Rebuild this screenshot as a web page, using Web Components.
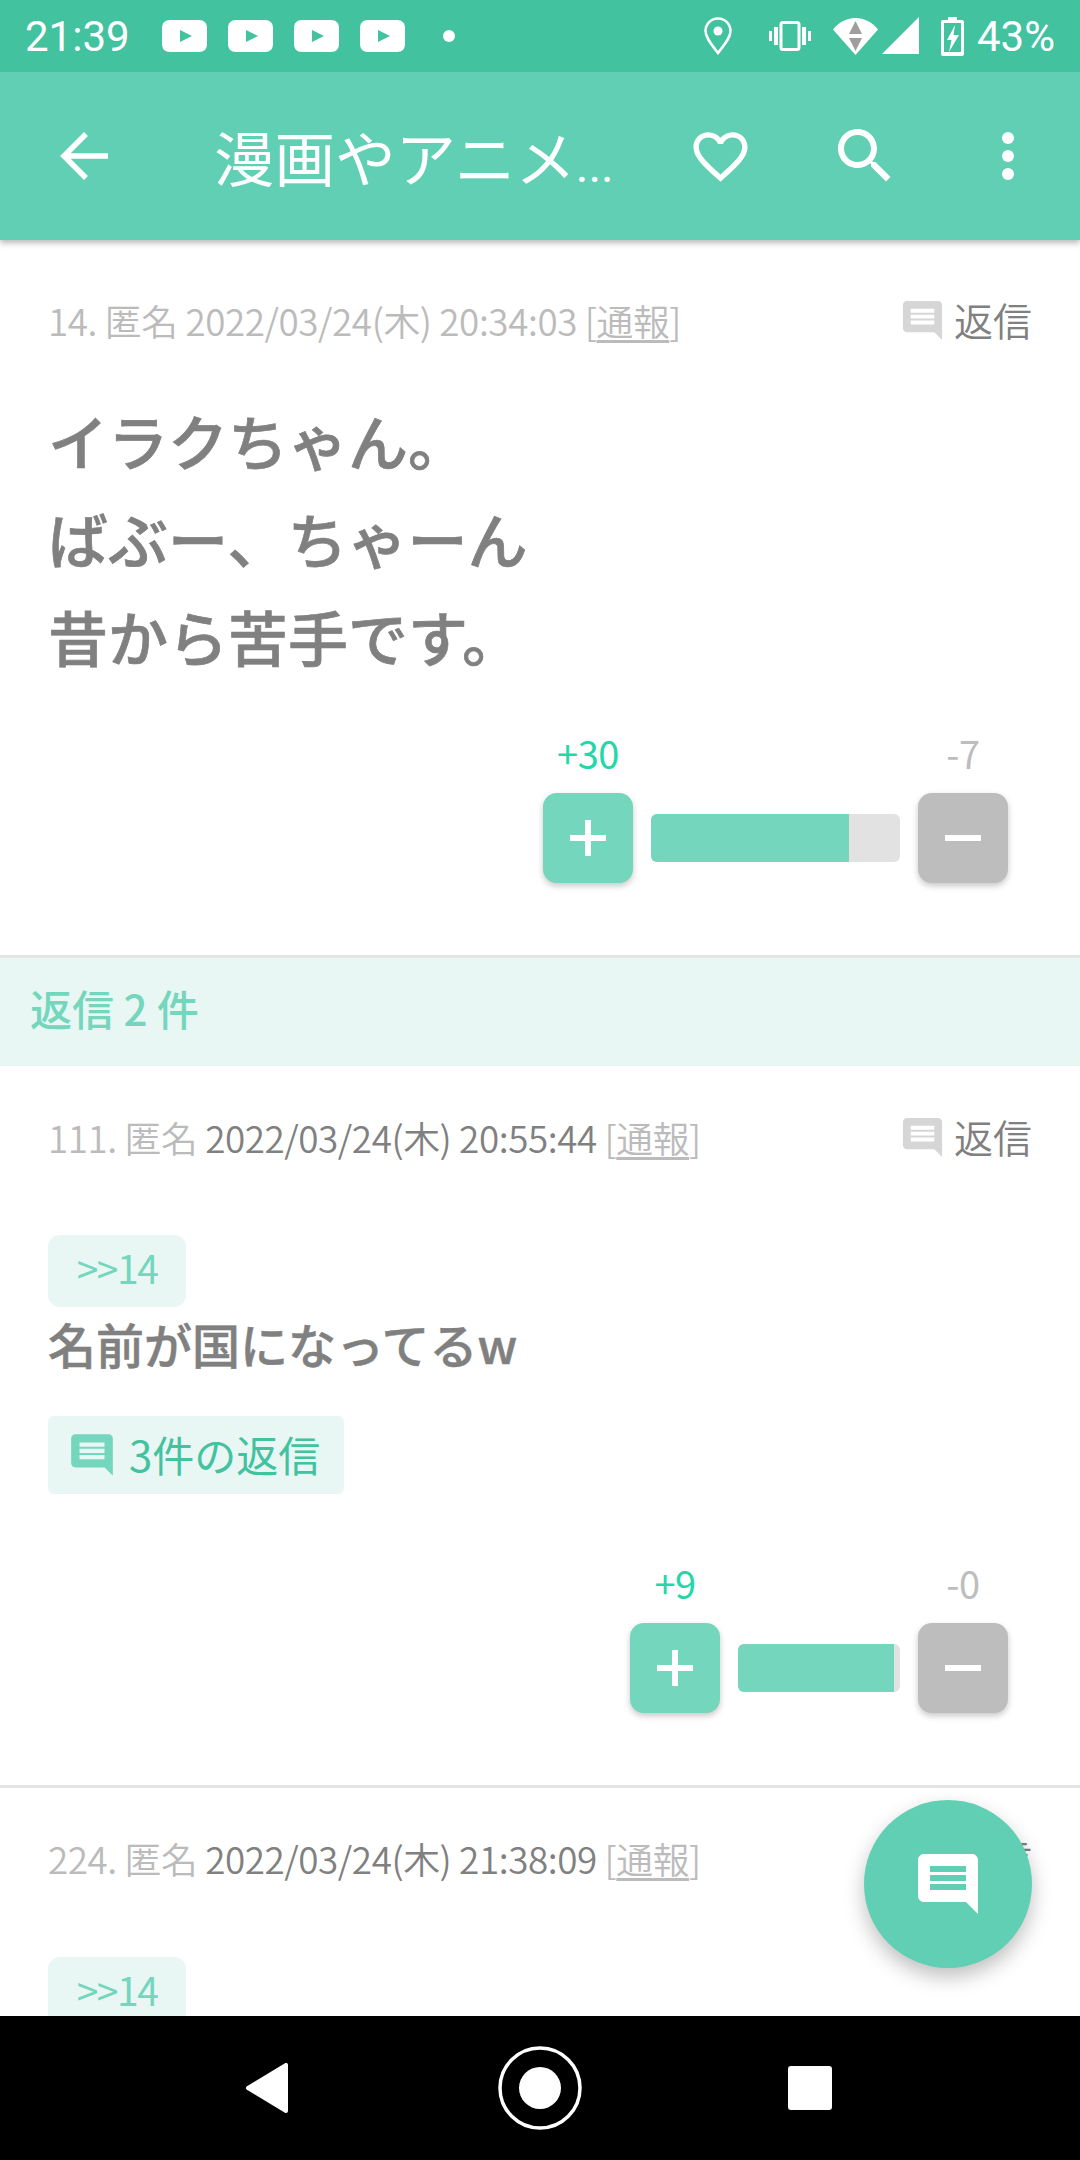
<!DOCTYPE html>
<html lang="ja">
<head>
<meta charset="utf-8">
<title>thread</title>
<style>
  html, body { margin: 0; padding: 0; background: #fff; }
  body { font-family: "Noto Sans CJK JP", "Noto Sans", sans-serif; }
  #first { --meta-top: 55px; --body-top: 46px; --vote-top: 43px; }
  #second { --meta-top: 46px; --body-top: 73px; --vote-top: 64px; }
  #third { --meta-top: 45px; --body-top: 74px; }
</style>
</head>
<body>
<thread-screen>
  <status-bar slot="top"></status-bar>
  <app-bar slot="top" title-text="漫画やアニメ"></app-bar>

  <post-item id="first" no="14." stamp="2022/03/24(木) 20:34:03" quiet big>
    <big-text>イラクちゃん。<br>ばぶー、ちゃーん<br>昔から苦手です。</big-text>
    <vote-bar slot="foot" plus="30" minus="7" track="249" fill="198"></vote-bar>
  </post-item>

  <reply-band>返信 2 件</reply-band>

  <post-item id="second" no="111." stamp="2022/03/24(木) 20:55:44">
    <anchor-tag>&gt;&gt;14</anchor-tag>
    <small-text>名前が国になってるw</small-text>
    <reply-chip>3件の返信</reply-chip>
    <vote-bar slot="foot" plus="9" minus="0" track="162" fill="156"></vote-bar>
  </post-item>

  <post-item id="third" no="224." stamp="2022/03/24(木) 21:38:09">
    <anchor-tag>&gt;&gt;14</anchor-tag>
  </post-item>

  <chat-fab slot="over"></chat-fab>
  <nav-bar slot="bottom"></nav-bar>
</thread-screen>

<script>
const COMMENT = 'M21.99 4c0-1.1-.89-2-1.99-2H4c-1.1 0-2 .9-2 2v12c0 1.1.9 2 2 2h14l4 4-.01-18zM18 14H6v-2h12v2zm0-3H6V9h12v2zm0-3H6V6h12v2z';
const CJK = '"Noto Sans CJK JP", "Noto Sans", sans-serif';

class ThreadScreen extends HTMLElement {
  constructor() {
    super();
    this.attachShadow({mode: 'open'}).innerHTML = `
    <style>
      :host { display: flex; flex-direction: column; position: relative; width: 1080px; height: 2160px; overflow: hidden; background: #fff; }
      .list { flex: 1; min-height: 0; overflow: hidden; }
    </style>
    <slot name="top"></slot>
    <div class="list"><slot></slot></div>
    <slot name="over"></slot>
    <slot name="bottom"></slot>`;
  }
}
customElements.define('thread-screen', ThreadScreen);

class StatusBar extends HTMLElement {
  constructor() {
    super();
    const yt = `<svg width="45" height="32" viewBox="0 0 45 32"><path fill="#fff" d="M8 0H37C42 0 45 3 45 8V24C45 29 42 32 37 32H8C3 32 0 29 0 24V8C0 3 3 0 8 0Z"/><path fill="#43c2a0" d="M18 10L30 16L18 22Z"/></svg>`;
    this.attachShadow({mode: 'open'}).innerHTML = `
    <style>
      :host { display: flex; align-items: center; height: 72px; padding: 0 25px; box-sizing: border-box; background: #43c2a0; color: #fff; font: 42px Roboto, sans-serif; position: relative; z-index: 3; }
      svg { display: block; flex: none; }
      .yt { display: flex; gap: 21px; margin-left: 32px; }
      .dot { width: 12px; height: 12px; border-radius: 50%; background: #fff; margin-left: 38px; }
      .right { margin-left: auto; display: flex; align-items: center; }
      .pct { margin-left: 13px; }
    </style>
    <span>21:39</span>
    <div class="yt">${yt}${yt}${yt}${yt}</div>
    <div class="dot"></div>
    <div class="right">
      <svg width="28" height="38" viewBox="0 0 28 38" style="margin-right:37px"><path fill="none" stroke="#fff" stroke-width="2.500" d="M14 36C8 28 1.500 21 1.500 14A12.500 12.500 0 0 1 26.500 14C26.500 21 20 28 14 36Z"/><circle cx="14" cy="14" r="4.500" fill="#fff"/></svg>
      <svg width="42" height="30" viewBox="0 0 42 30" style="margin-right:22px"><rect x="12" y="1.500" width="18" height="27" rx="2" fill="none" stroke="#fff" stroke-width="3"/><path fill="#fff" d="M5 6h4v18H5zM33 6h4v18h-4zM0 10h3v10H0zM39 10h3v10h-3z"/></svg>
      <svg width="45" height="38" viewBox="0 0 45 38" style="margin-right:4px"><path fill="#fff" d="M0 12.500C6 5 14 1 22.500 1S39 5 45 12.500L22.500 38Z"/><path fill="#9e9e9e" d="M22.500 4L29 17H16ZM16 21H29L22.500 34Z"/></svg>
      <svg width="37" height="38" viewBox="0 0 37 38" style="margin-right:22px"><path fill="#fff" d="M37 0V37H0Z"/></svg>
      <svg width="23" height="39" viewBox="0 0 23 39"><path fill="#fff" d="M7 0H16V3H21A2 2 0 0 1 23 5V37A2 2 0 0 1 21 39H2A2 2 0 0 1 0 37V5A2 2 0 0 1 2 3H7Z"/><path fill="#43c2a0" d="M3 6H20V35H3Z"/><path fill="#fff" d="M14 8L6 23H10.500L8 35L18 18H12.500Z"/></svg>
      <span class="pct">43%</span>
    </div>`;
  }
}
customElements.define('status-bar', StatusBar);

class AppBar extends HTMLElement {
  constructor() {
    super();
    this.attachShadow({mode: 'open'});
  }
  connectedCallback() {
    this.shadowRoot.innerHTML = `
    <style>
      :host { display: flex; align-items: center; height: 168px; background: #60cfb3; color: #fff; position: relative; z-index: 2; box-shadow: 0 3px 6px rgba(0,0,0,.28); }
      svg { display: block; flex: none; }
      .title { font: 400 60.500px/80px ${CJK}; margin-left: 94px; width: 414px; white-space: nowrap; }
      .more { font: 400 48px/48px Roboto, sans-serif; }
      .back { margin-left: 48px; }
    </style>
    <svg class="back" width="72" height="72" viewBox="0 0 72 72"><path fill="none" stroke="#fff" stroke-width="5.500" d="M60 36H16M38 14L16 36L38 58"/></svg>
    <div class="title">${this.getAttribute('title-text')}<span class="more">...</span></div>
    <svg width="65" height="65" viewBox="0 0 24 24" style="margin-left:60px"><path fill="#fff" d="M16.500 3c-1.740 0-3.410.810-4.500 2.090C10.910 3.810 9.240 3 7.500 3 4.420 3 2 5.420 2 8.500c0 3.780 3.400 6.860 8.550 11.540L12 21.350l1.450-1.320C18.600 15.360 22 12.280 22 8.500 22 5.420 19.580 3 16.500 3zm-4.400 15.550l-.1.100-.1-.100C7.140 14.240 4 11.390 4 8.500 4 6.500 5.500 5 7.500 5c1.540 0 3.040.990 3.570 2.360h1.870C13.460 5.990 14.960 5 16.500 5c2 0 3.500 1.500 3.500 3.500 0 2.890-3.140 5.740-7.900 10.050z"/></svg>
    <svg width="72" height="72" viewBox="0 0 24 24" style="margin-left:76px"><path fill="#fff" d="M15.500 14h-.79l-.28-.27C15.410 12.590 16 11.110 16 9.500 16 5.910 13.090 3 9.500 3S3 5.910 3 9.500 5.910 16 9.500 16c1.610 0 3.090-.59 4.230-1.570l.27.280v.79l5 4.990L20.490 19l-4.990-5zm-6 0C7.010 14 5 11.990 5 9.500S7.010 5 9.500 5 14 7.010 14 9.500 11.990 14 9.500 14z"/></svg>
    <svg width="12" height="48" viewBox="0 0 12 48" style="margin-left:101px"><circle cx="6" cy="6" r="6" fill="#fff"/><circle cx="6" cy="24" r="6" fill="#fff"/><circle cx="6" cy="42" r="6" fill="#fff"/></svg>`;
  }
}
customElements.define('app-bar', AppBar);

class PostItem extends HTMLElement {
  constructor() {
    super();
    this.attachShadow({mode: 'open'});
  }
  connectedCallback() {
    const quiet = this.hasAttribute('quiet');
    this.shadowRoot.innerHTML = `
    <style>
      :host { display: block; padding: var(--meta-top, 50px) 48px 72px; border-bottom: 3px solid #e4e4e4; }
      .head { display: flex; align-items: center; height: 50px; justify-content: space-between; font: 350 36.800px/50px ${CJK}; letter-spacing: -.42px; color: #bbb; white-space: nowrap; }
      .stamp { color: ${quiet ? '#bbb' : '#808080'}; }
      u { text-underline-offset: 4px; }
      .answer { display: flex; align-items: center; color: #808080; font-size: 39px; letter-spacing: 0; margin-top: -2px; }
      svg { display: block; margin-right: 8px; margin-top: 2px; }
      .body { margin-top: var(--body-top, 70px); }
      .foot { margin-top: var(--vote-top, 41px); margin-right: 24px; }
    </style>
    <div class="head">
      <span>${this.getAttribute('no')} 匿名 <span class="stamp">${this.getAttribute('stamp')}</span> [<u>通報</u>]</span>
      <span class="answer"><svg width="47" height="47" viewBox="0 0 24 24"><path fill="#d6d6d6" d="${COMMENT}"/></svg>返信</span>
    </div>
    <div class="body"><slot></slot></div>
    <div class="foot"><slot name="foot"></slot></div>`;
  }
}
customElements.define('post-item', PostItem);

class BigText extends HTMLElement {
  constructor() {
    super();
    this.attachShadow({mode: 'open'}).innerHTML = `
    <style>:host { display: block; font: 500 60px/98px ${CJK}; -webkit-text-stroke: .7px #808080; color: #808080; }</style>
    <slot></slot>`;
  }
}
customElements.define('big-text', BigText);

class SmallText extends HTMLElement {
  constructor() {
    super();
    this.attachShadow({mode: 'open'}).innerHTML = `
    <style>:host { display: block; font: 500 48px/66px ${CJK}; -webkit-text-stroke: .5px #808080; color: #808080; margin-top: 3px; }</style>
    <slot></slot>`;
  }
}
customElements.define('small-text', SmallText);

class AnchorTag extends HTMLElement {
  constructor() {
    super();
    this.attachShadow({mode: 'open'}).innerHTML = `
    <style>
      :host { display: flex; align-items: center; justify-content: center; width: 138px; height: 72px; box-sizing: border-box; padding-bottom: 8px; border-radius: 12px; background: #e9f7f4; color: #74d6bc; font: 400 39px ${CJK}; letter-spacing: -1.500px; }
    </style>
    <slot></slot>`;
  }
}
customElements.define('anchor-tag', AnchorTag);

class ReplyChip extends HTMLElement {
  constructor() {
    super();
    this.attachShadow({mode: 'open'}).innerHTML = `
    <style>
      :host { display: flex; align-items: center; width: 296px; height: 78px; box-sizing: border-box; margin-top: 40px; padding-left: 19px; border-radius: 6px; background: #e9f7f4; color: #43c2a0; font: 400 42px ${CJK}; }
      svg { display: block; margin-right: 12px; }
      .t { margin-top: -3px; }
    </style>
    <svg width="50" height="50" viewBox="0 0 24 24"><path fill="#74d6bc" d="${COMMENT}"/></svg>
    <span class="t"><slot></slot></span>`;
  }
}
customElements.define('reply-chip', ReplyChip);

class VoteBar extends HTMLElement {
  constructor() {
    super();
    this.attachShadow({mode: 'open'});
  }
  connectedCallback() {
    const track = this.getAttribute('track');
    const fill = this.getAttribute('fill');
    this.shadowRoot.innerHTML = `
    <style>
      :host { display: grid; grid-template-columns: 90px ${track}px 90px; column-gap: 18px; justify-content: end; justify-items: center; align-items: center; row-gap: 15px; }
      .n { font: 400 38px/50px ${CJK}; letter-spacing: -.5px; }
      .up { color: #22d8a8; }
      .down { color: #bdbdbd; grid-column: 3; }
      .btn { width: 90px; height: 90px; border-radius: 14px; display: flex; align-items: center; justify-content: center; box-shadow: 0 3px 6px rgba(0,0,0,.22); }
      .plus { background: #74d6bc; }
      .minus { background: #bdbdbd; }
      .track { width: 100%; height: 48px; border-radius: 6px; background: #e2e2e2; overflow: hidden; }
      .fill { height: 100%; width: ${fill}px; background: #74d6bc; }
      svg { display: block; }
    </style>
    <span class="n up">+${this.getAttribute('plus')}</span>
    <span class="n down">-${this.getAttribute('minus')}</span>
    <div class="btn plus"><svg width="36" height="36" viewBox="0 0 36 36"><path fill="#fff" d="M15 0h6v15h15v6H21v15h-6V21H0v-6h15z"/></svg></div>
    <div class="track"><div class="fill"></div></div>
    <div class="btn minus"><svg width="36" height="6" viewBox="0 0 36 6"><path fill="#fff" d="M0 0h36v6H0z"/></svg></div>`;
  }
}
customElements.define('vote-bar', VoteBar);

class ReplyBand extends HTMLElement {
  constructor() {
    super();
    this.attachShadow({mode: 'open'}).innerHTML = `
    <style>
      :host { display: flex; align-items: center; height: 108px; box-sizing: border-box; padding: 0 0 9px 30px; background: #e9f7f4; color: #74d6bc; font: 500 42px ${CJK}; }
    </style>
    <slot></slot>`;
  }
}
customElements.define('reply-band', ReplyBand);

class ChatFab extends HTMLElement {
  constructor() {
    super();
    this.attachShadow({mode: 'open'}).innerHTML = `
    <style>
      :host { position: absolute; left: 864px; top: 1800px; width: 168px; height: 168px; border-radius: 50%; background: #60cfb3; display: flex; align-items: center; justify-content: center; box-shadow: 0 9px 20px rgba(0,0,0,.25); }
      svg { display: block; }
    </style>
    <svg width="72" height="72" viewBox="0 0 24 24"><path fill="#fff" d="${COMMENT}"/></svg>`;
  }
}
customElements.define('chat-fab', ChatFab);

class NavBar extends HTMLElement {
  constructor() {
    super();
    this.attachShadow({mode: 'open'}).innerHTML = `
    <style>
      :host { display: flex; align-items: center; height: 144px; background: #000; flex: none; position: relative; z-index: 3; }
      svg { display: block; flex: none; }
    </style>
    <svg width="44" height="50" viewBox="0 0 44 50" style="margin-left:245px"><path fill="#fff" stroke="#fff" stroke-width="4" stroke-linejoin="round" d="M3 25L41 2V48Z"/></svg>
    <svg width="84" height="84" viewBox="0 0 84 84" style="margin-left:209px"><circle cx="42" cy="42" r="40" fill="none" stroke="#fff" stroke-width="3.500"/><circle cx="42" cy="42" r="21" fill="#fff"/></svg>
    <div style="width:44px;height:44px;border-radius:3px;background:#fff;margin-left:206px"></div>`;
  }
}
customElements.define('nav-bar', NavBar);
</script>
</body>
</html>
